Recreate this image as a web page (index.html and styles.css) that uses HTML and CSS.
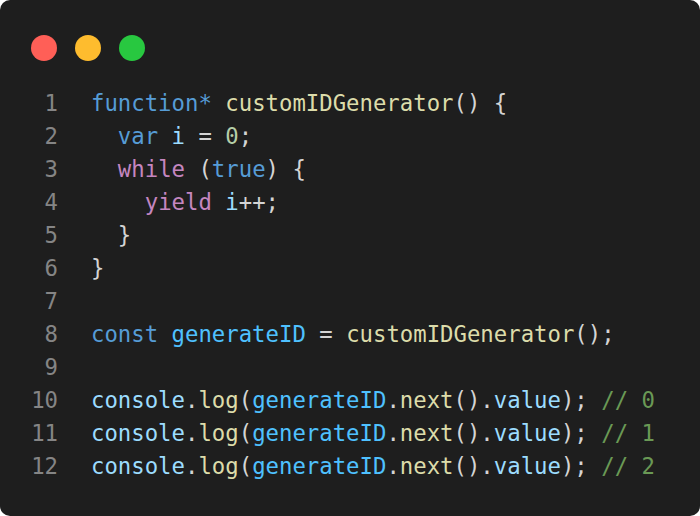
FILE: index.html
```html
<!DOCTYPE html>
<html>
<head>
<meta charset="utf-8">
<link rel="stylesheet" href="styles.css">
</head>
<body>
<div class="card">
  <div class="dots">
    <span class="dot red"></span>
    <span class="dot yellow"></span>
    <span class="dot green"></span>
  </div>
  <div class="code">
    <div class="ln">1</div><div class="line"><span class="kw">function</span><span class="kw">*</span> <span class="fn">customIDGenerator</span><span class="p">() {</span></div>
    <div class="ln">2</div><div class="line">  <span class="kw">var</span> <span class="var">i</span> <span class="p">=</span> <span class="num">0</span><span class="p">;</span></div>
    <div class="ln">3</div><div class="line">  <span class="ctl">while</span> <span class="p">(</span><span class="kw">true</span><span class="p">) {</span></div>
    <div class="ln">4</div><div class="line">    <span class="ctl">yield</span> <span class="var">i</span><span class="p">++;</span></div>
    <div class="ln">5</div><div class="line">  <span class="p">}</span></div>
    <div class="ln">6</div><div class="line"><span class="p">}</span></div>
    <div class="ln">7</div><div class="line"> </div>
    <div class="ln">8</div><div class="line"><span class="kw">const</span> <span class="const">generateID</span> <span class="p">=</span> <span class="fn">customIDGenerator</span><span class="p">();</span></div>
    <div class="ln">9</div><div class="line"> </div>
    <div class="ln">10</div><div class="line"><span class="var">console</span><span class="p">.</span><span class="fn">log</span><span class="p">(</span><span class="const">generateID</span><span class="p">.</span><span class="fn">next</span><span class="p">().</span><span class="var">value</span><span class="p">);</span> <span class="cm">// 0</span></div>
    <div class="ln">11</div><div class="line"><span class="var">console</span><span class="p">.</span><span class="fn">log</span><span class="p">(</span><span class="const">generateID</span><span class="p">.</span><span class="fn">next</span><span class="p">().</span><span class="var">value</span><span class="p">);</span> <span class="cm">// 1</span></div>
    <div class="ln">12</div><div class="line"><span class="var">console</span><span class="p">.</span><span class="fn">log</span><span class="p">(</span><span class="const">generateID</span><span class="p">.</span><span class="fn">next</span><span class="p">().</span><span class="var">value</span><span class="p">);</span> <span class="cm">// 2</span></div>
  </div>
</div>
</body>
</html>
```

FILE: styles.css
```css
html, body {
  margin: 0;
  padding: 0;
  background: #ffffff;
}
.card {
  box-sizing: border-box;
  width: 700px;
  height: 516px;
  background: #1e1e1e;
  border-radius: 10px;
  padding: 35px 0 0 31px;
}
.dots {
  display: flex;
  gap: 18px;
  height: 26px;
}
.dot {
  width: 26px;
  height: 26px;
  border-radius: 50%;
}
.red { background: #ff5f57; }
.yellow { background: #febc2e; }
.green { background: #28c840; }
.code {
  margin-top: 26px;
  display: grid;
  grid-template-columns: 27px 1fr;
  column-gap: 33px;
  font-family: "DejaVu Sans Mono", "Liberation Mono", monospace;
  font-size: 22.3px;
  line-height: 33px;
  color: #d4d4d4;
}
.ln {
  text-align: right;
  color: #858585;
}
.line {
  white-space: pre;
}
.kw { color: #569cd6; }
.fn { color: #dcdcaa; }
.p { color: #d4d4d4; }
.var { color: #9cdcfe; }
.const { color: #4fc1ff; }
.num { color: #b5cea8; }
.ctl { color: #c586c0; }
.cm { color: #6a9955; }
```
